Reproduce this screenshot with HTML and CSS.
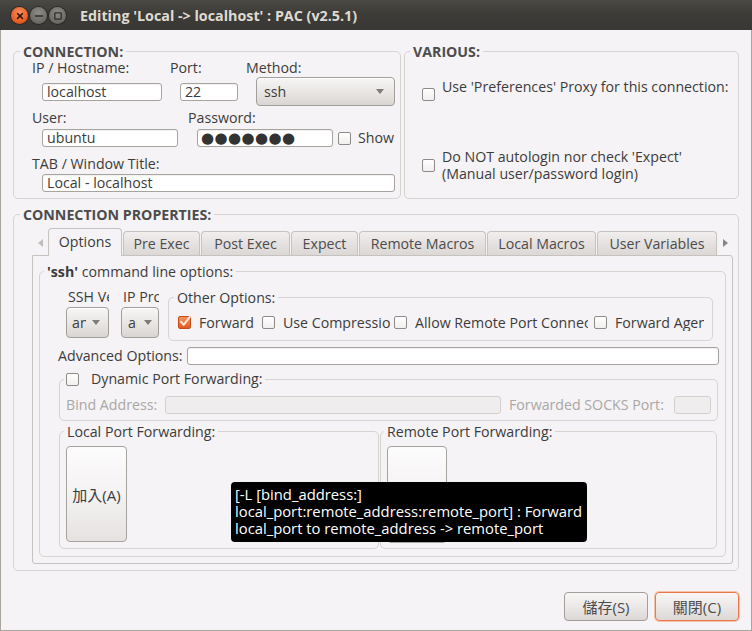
FILE: index.html
```html
<!DOCTYPE html>
<html lang="en">
<head>
<meta charset="utf-8">
<title>Editing 'Local -&gt; localhost' : PAC (v2.5.1)</title>
<link rel="stylesheet" href="styles.css">
</head>
<body>
<div class="window">
  <header class="titlebar">
    <div class="wm-buttons">
      <span class="wm close"><svg viewBox="0 0 16 16" width="16" height="16"><path d="M5.6 5.6l4.8 4.8M10.4 5.6l-4.8 4.8" stroke="#3b1708" stroke-width="1.5" stroke-linecap="round"/></svg></span>
      <span class="wm min"><svg viewBox="0 0 16 16" width="16" height="16"><path d="M4.5 8h7" stroke="#2e2d2a" stroke-width="1.5" stroke-linecap="round"/></svg></span>
      <span class="wm max"><svg viewBox="0 0 16 16" width="16" height="16"><rect x="4.8" y="4.8" width="6.4" height="6.4" rx="0.8" fill="none" stroke="#2e2d2a" stroke-width="1.3"/></svg></span>
    </div>
    <div class="title">Editing 'Local -&gt; localhost' : PAC (v2.5.1)</div>
  </header>

  <main class="client">
    <div class="top-row">
      <fieldset class="frame conn">
        <legend class="frame-title">CONNECTION:</legend>
        <div class="row lbl-row r-lbl1">
          <span class="lbl w-ip">IP / Hostname:</span>
          <span class="lbl w-port">Port:</span>
          <span class="lbl">Method:</span>
        </div>
        <div class="row r-in1">
          <span class="entry e-host">localhost</span>
          <span class="entry e-port">22</span>
          <span class="combo c-method"><span class="combo-text">ssh</span><i class="arrow"></i></span>
        </div>
        <div class="row lbl-row r-lbl2">
          <span class="lbl w-user">User:</span>
          <span class="lbl">Password:</span>
        </div>
        <div class="row r-in2">
          <span class="entry e-user">ubuntu</span>
          <span class="entry e-pass"><span class="dots">●●●●●●●</span></span>
          <span class="check cb-show"></span>
          <span class="lbl show-lbl">Show</span>
        </div>
        <div class="row lbl-row r-lbl3">
          <span class="lbl">TAB / Window Title:</span>
        </div>
        <div class="row r-in3">
          <span class="entry e-title">Local - localhost</span>
        </div>
      </fieldset>

      <fieldset class="frame various">
        <legend class="frame-title">VARIOUS:</legend>
        <div class="v-row v-row1">
          <span class="check"></span>
          <span class="v-text">Use 'Preferences' Proxy for this connection:</span>
        </div>
        <div class="v-row v-row2">
          <span class="check"></span>
          <span class="v-text">Do NOT autologin nor check 'Expect'<br>(Manual user/password login)</span>
        </div>
      </fieldset>
    </div>

    <fieldset class="frame props">
      <legend class="frame-title">CONNECTION PROPERTIES:</legend>
      <div class="notebook">
        <div class="tabs">
          <span class="tab-arrow left"><svg viewBox="0 0 5 8" width="5" height="8"><path d="M5 0v8L0 4z" fill="#c2beba"/></svg></span>
          <span class="tab active t-opt">Options</span>
          <span class="tab t-pre">Pre Exec</span>
          <span class="tab t-post">Post Exec</span>
          <span class="tab t-exp">Expect</span>
          <span class="tab t-rm">Remote Macros</span>
          <span class="tab t-lm">Local Macros</span>
          <span class="tab t-uv">User Variables</span>
          <span class="tab-arrow right"><svg viewBox="0 0 5 8" width="5" height="8"><path d="M0 0v8L5 4z" fill="#8a8682"/></svg></span>
        </div>
        <div class="page">
          <fieldset class="frame ssh">
            <legend class="ssh-title"><b>'ssh'</b> command line options:</legend>

            <div class="row-a">
              <div class="col c1">
                <span class="lbl clip">SSH Version:</span>
                <span class="combo small"><span class="combo-text">any</span><i class="arrow"></i></span>
              </div>
              <div class="col c2">
                <span class="lbl clip">IP Protocol:</span>
                <span class="combo small"><span class="combo-text">any</span><i class="arrow"></i></span>
              </div>
              <fieldset class="frame other">
                <legend class="plain-title">Other Options:</legend>
                <div class="opts">
                  <span class="opt o1"><span class="check checked"><svg viewBox="0 0 14 14" width="14" height="14"><path d="M3 6.8l2.7 3L11.6 2.2" fill="none" stroke="#fde3d3" stroke-width="2.1" stroke-linecap="round" stroke-linejoin="round"/></svg></span><span class="opt-lbl">Forward</span></span>
                  <span class="opt o2"><span class="check"></span><span class="opt-lbl">Use Compression</span></span>
                  <span class="opt o3"><span class="check"></span><span class="opt-lbl">Allow Remote Port Connection</span></span>
                  <span class="opt o4"><span class="check"></span><span class="opt-lbl">Forward Agent</span></span>
                </div>
              </fieldset>
            </div>

            <div class="row-b">
              <span class="lbl adv-lbl">Advanced Options:</span>
              <span class="entry adv-entry"></span>
            </div>

            <fieldset class="frame dyn">
              <legend class="dyn-title"><span class="check"></span><span class="dyn-text">Dynamic Port Forwarding:</span></legend>
              <div class="bind-row">
                <span class="lbl dis bind-lbl">Bind Address:</span>
                <span class="entry dis-entry bind-entry"></span>
                <span class="lbl dis socks-lbl">Forwarded SOCKS Port:</span>
                <span class="entry dis-entry socks-entry"></span>
              </div>
            </fieldset>

            <div class="row-d">
              <fieldset class="frame pf local">
                <legend class="plain-title">Local Port Forwarding:</legend>
                <span class="tall-btn">加入(A)</span>
              </fieldset>
              <fieldset class="frame pf remote">
                <legend class="plain-title">Remote Port Forwarding:</legend>
                <span class="tall-btn blank"></span>
              </fieldset>
            </div>
          </fieldset>
        </div>
      </div>
    </fieldset>

    <div class="actions">
      <span class="btn">儲存(S)</span>
      <span class="btn default">關閉(C)</span>
    </div>
  </main>

  <div class="tooltip">[-L [bind_address:]<br>local_port:remote_address:remote_port] : Forward<br>local_port to remote_address -&gt; remote_port</div>
</div>
</body>
</html>
```

FILE: styles.css
```css
* { box-sizing: border-box; }
html, body { margin: 0; padding: 0; }
body {
  width: 752px;
  height: 631px;
  overflow: hidden;
  background: #f5f3f5;
  font-family: "Open Sans", "Noto Sans CJK TC", sans-serif;
  font-size: 14.2px;
  color: #3c3c3c;
}
.window {
  width: 752px;
  height: 631px;
  display: flex;
  flex-direction: column;
  position: relative;
}

/* title bar */
.titlebar {
  height: 30px;
  flex: none;
  display: flex;
  align-items: center;
  background: linear-gradient(#4a4944, #3d3c38 45%, #393834);
}
.wm-buttons { display: flex; gap: 2px; margin-left: 11px; margin-top: 1px; }
.wm { width: 17px; height: 17px; border-radius: 50%; display: flex; align-items: center; justify-content: center; }
.wm svg { display: block; }
.close { background: radial-gradient(circle at 50% 35%, #f88f5f, #e4581f 70%, #b9461a); box-shadow: 0 0 0 1px #2b2a27; }
.min, .max { background: radial-gradient(circle at 50% 35%, #8e8c86, #6a6964 70%, #55544f); box-shadow: 0 0 0 1px #2b2a27; }
.title {
  margin-left: 14px;
  color: #dfdbd2;
  font-weight: bold;
  font-size: 14.3px;
  white-space: nowrap;
}

/* client area */
.client {
  flex: 1;
  border: 1px solid #a8a49e;
  border-top: none;
  padding: 14px 12px 0 12px;
  display: flex;
  flex-direction: column;
}
.top-row { display: flex; align-items: stretch; }

.frame {
  margin: 0;
  padding: 0;
  border: 1px solid #d7d3d1;
  border-radius: 5px;
  min-width: 0;
}
.frame-title {
  padding: 0 3px;
  margin-left: 6px;
  line-height: 15px;
  font-weight: bold;
  color: #4c4c4c;
}
.plain-title, .ssh-title {
  padding: 0 3px;
  line-height: 15px;
  color: #3c3c3c;
}
.ssh-title b { font-weight: bold; }

.row { display: flex; align-items: center; }
.lbl { white-space: nowrap; line-height: 16px; }

.entry {
  display: flex;
  align-items: center;
  height: 18px;
  background: #fff;
  border: 1px solid #a7a39f;
  border-radius: 3px;
  padding-left: 4px;
  box-shadow: inset 0 1px 1px rgba(0,0,0,0.06);
  white-space: nowrap;
  overflow: hidden;
  line-height: 16px;
}
.check {
  flex: none;
  width: 13px;
  height: 13px;
  border: 1px solid #8e8a86;
  border-radius: 2px;
  background: linear-gradient(#ffffff, #f1efef);
  display: inline-block;
}
.check.checked {
  border-color: #c24d17;
  background: linear-gradient(#f6915f, #e15b22);
}
.check.checked svg { display: block; margin: -2px 0 0 -1px; }

.combo {
  display: flex;
  align-items: center;
  border: 1px solid #a29e9a;
  border-radius: 4px;
  background: linear-gradient(#f7f6f5, #e8e5e3 55%, #d9d5d2);
  box-shadow: inset 0 1px 0 #fff;
  overflow: hidden;
}
.arrow {
  display: block;
  flex: none;
  width: 0;
  height: 0;
  border-left: 4px solid transparent;
  border-right: 4px solid transparent;
  border-top: 5px solid #7f7b77;
}

/* CONNECTION frame */
.conn { width: 388px; padding-bottom: 6px; }
.r-lbl1 { margin-top: 1px; height: 16px; padding-left: 18px; }
.w-ip { width: 138px; }
.w-port { width: 76px; }
.r-in1 { margin-top: 1px; height: 29px; padding-left: 28px; }
.e-host { width: 120px; }
.e-port { width: 58px; margin-left: 18px; }
.c-method { width: 139px; height: 29px; margin-left: 18px; padding: 0 10px 0 7px; }
.c-method .combo-text { flex: 1; }
.r-lbl2 { margin-top: 4px; height: 16px; padding-left: 18px; }
.w-user { width: 156px; }
.r-in2 { margin-top: 3px; height: 18px; padding-left: 28px; }
.e-user { width: 136px; }
.e-pass { width: 136px; margin-left: 19px; padding-left: 3px; }
.dots { font-family: "DejaVu Sans", sans-serif; font-size: 15px; letter-spacing: 0.4px; color: #333; }
.cb-show { margin-left: 5px; }
.show-lbl { margin-left: 7px; }
.r-lbl3 { margin-top: 9px; height: 16px; padding-left: 18px; }
.r-in3 { margin-top: 2px; height: 18px; padding-left: 28px; }
.e-title { width: 353px; }

/* VARIOUS frame */
.various { flex: 1; margin-left: 3px; }
.various .frame-title { margin-left: 5px; }
.v-row { display: flex; padding-left: 17px; }
.v-row .v-text { margin-left: 7px; line-height: 17px; }
.v-row1 { margin-top: 19px; align-items: flex-start; }
.v-row1 .check { margin-top: 10px; }
.v-row2 { margin-top: 47px; align-items: center; }

/* CONNECTION PROPERTIES */
.props { margin-top: 8px; padding-bottom: 6px; }
.notebook { margin: 6px 5px 0 18px; }
.tabs { display: flex; align-items: flex-end; height: 27px; }
.tab-arrow { display: flex; align-items: center; justify-content: center; align-self: stretch; padding-top: 3px; }
.tab-arrow.left { width: 16px; }
.tab-arrow.right { width: 14px; margin-left: 1px; }
.tab {
  height: 24px;
  display: flex;
  align-items: center;
  justify-content: center;
  border: 1px solid #c6c2bf;
  border-bottom: none;
  border-radius: 4px 4px 0 0;
  background: linear-gradient(#f1eeee, #e3dfde 60%, #dcd8d6);
  color: #4c4c4c;
  margin-right: 1px;
  white-space: nowrap;
}
.tab.active {
  height: 28px;
  margin-bottom: -1px;
  background: #f5f3f5;
  color: #3c3c3c;
  position: relative;
  z-index: 1;
  padding-bottom: 2px;
}
.t-opt { width: 74px; }
.t-pre { width: 77px; }
.t-post { width: 89px; }
.t-exp { width: 67px; }
.t-rm { width: 127px; }
.t-lm { width: 109px; }
.t-uv { width: 120px; margin-right: 0; }

.page {
  border: 1px solid #c6c2bf;
  border-radius: 0 3px 3px 3px;
  padding: 8px 6px 6px 6px;
  background: #f5f3f5;
}
.ssh { padding-bottom: 7px; }
.ssh-title { margin-left: 4px; }

.row-a { display: flex; align-items: flex-start; margin-top: 10px; padding-left: 26px; }
.col { display: flex; flex-direction: column; }
.c1 { width: 43px; }
.c2 { width: 38px; margin-left: 12px; }
.col .clip { overflow: hidden; margin-left: 2px; }
.combo.small { height: 31px; margin-top: 2px; padding: 0 7px 0 5px; }
.combo.small .combo-text { width: 14px; overflow: hidden; white-space: nowrap; flex: none; margin-right: 6px; }
.c2 .combo.small .combo-text { width: 9px; margin-left: 1px; margin-right: 7px; }
.other { width: 545px; margin-left: 9px; margin-top: 1px; }
.other .plain-title { margin-left: 5px; }
.opts { display: flex; align-items: center; height: 35px; padding-left: 9px; }
.opt { display: flex; align-items: center; flex: none; overflow: hidden; }
.opt-lbl { margin-left: 8px; white-space: nowrap; overflow: hidden; line-height: 16px; flex: 1; }
.o1 { width: 84px; }
.o2 { width: 132px; padding-right: 4px; }
.o3 { width: 200px; padding-right: 6px; }
.o4 { width: 110px; }

.row-b { display: flex; align-items: center; margin-top: 6px; height: 18px; padding-left: 18px; padding-right: 6px; }
.adv-lbl { width: 129px; }
.adv-entry { flex: 1; }

.dyn { margin: 6px 7px 0 19px; padding-bottom: 6px; }
.dyn-title { display: flex; align-items: center; margin-left: 4px; padding: 0 2px; line-height: 16px; }
.dyn-text { margin-left: 12px; }
.bind-row { display: flex; align-items: center; margin-top: 9px; height: 18px; padding: 0 6px; }
.dis { color: #aaa7a5; }
.dis-entry { background: #efedee; border-color: #d4d0ce; box-shadow: none; }
.bind-lbl { width: 99px; }
.bind-entry { flex: 1; }
.socks-lbl { width: 158px; margin-left: 8px; margin-right: 7px; }
.socks-entry { width: 37px; }

.row-d { display: flex; margin-top: 3px; margin-left: 19px; }
.pf { padding-bottom: 5px; }
.local { width: 320px; }
.remote { width: 337px; margin-left: 1px; }
.local .plain-title { margin-left: 4px; }
.remote .plain-title { margin-left: 3px; }
.tall-btn {
  display: flex;
  align-items: center;
  justify-content: center;
  margin: 7px 0 0 6px;
  width: 61px;
  height: 96px;
  border: 1px solid #a6a29e;
  border-radius: 4px;
  background: linear-gradient(#fdfcfc, #f5f3f3 45%, #e6e2e2);
  color: #3c3c3c;
  font-size: 15px;
  white-space: nowrap;
}
.tall-btn.blank { width: 60px; height: 97px; }

/* bottom buttons */
.actions { display: flex; justify-content: flex-end; gap: 7px; margin-top: 21px; }
.btn {
  width: 84px;
  height: 29px;
  display: flex;
  align-items: center;
  justify-content: center;
  border: 1px solid #a19d99;
  border-radius: 4px;
  background: linear-gradient(#f8f7f6, #ebe8e7 50%, #dcd8d6);
  color: #4c4c4c;
  font-size: 15px;
}
.btn.default { border-color: #e9774a; box-shadow: 0 0 0 1px #f6c3a8; }

/* tooltip */
.tooltip {
  position: absolute;
  left: 231px;
  top: 482px;
  width: 356px;
  height: 60px;
  background: #000;
  color: #fff;
  border-radius: 4px;
  padding: 4px 0 0 4px;
  font-size: 14.8px;
  line-height: 17px;
  white-space: nowrap;
}
```
